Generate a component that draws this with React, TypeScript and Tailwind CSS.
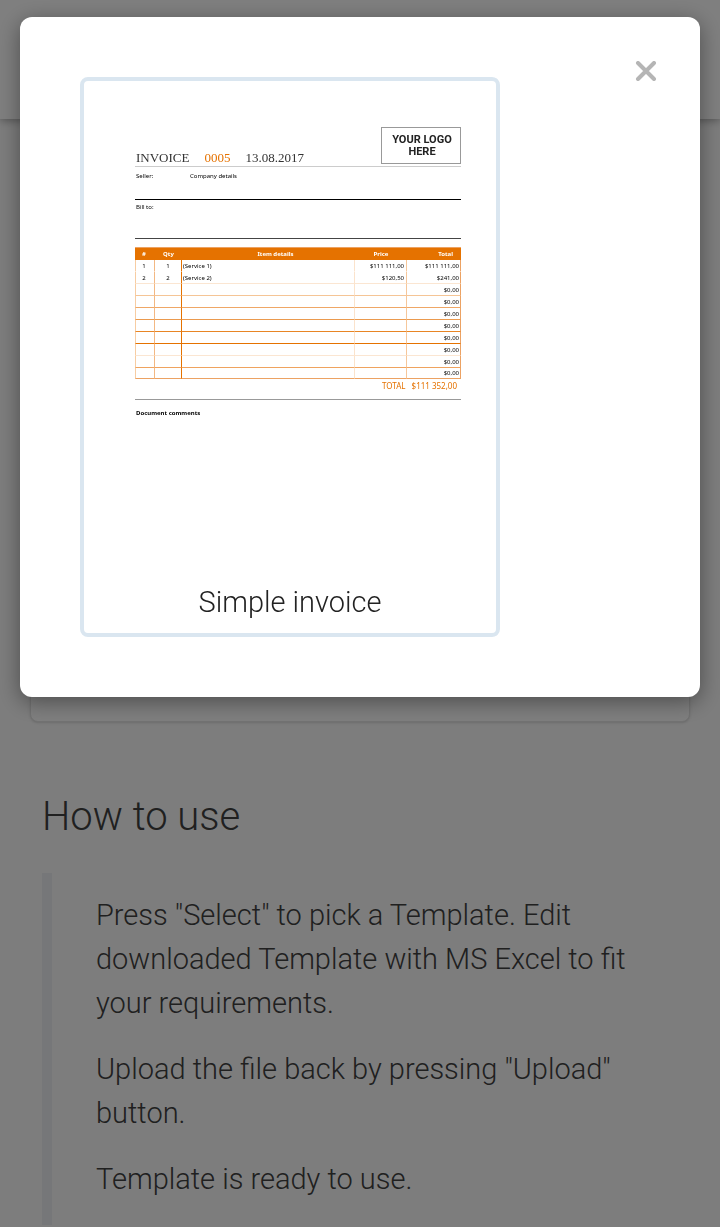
import React from 'react';

interface InvoiceRow {
  id: string;
  qty: string;
  details: string;
  price: string;
  total: string;
  lineClass: string;
}

const emptyRow = { id: '', qty: '', details: '', price: '', total: '$0,00' };

const rows: InvoiceRow[] = [
  { id: '1', qty: '1', details: '(Service 1)', price: '$111 111,00', total: '$111 111,00', lineClass: 'h-3 border-b-transparent' },
  { id: '2', qty: '2', details: '(Service 2)', price: '$120,50', total: '$241,00', lineClass: 'h-3 border-b-[#fbe6d2]' },
  { ...emptyRow, lineClass: 'h-3 border-b-[#f5c596]' },
  { ...emptyRow, lineClass: 'h-3 border-b-[#efa766]' },
  { ...emptyRow, lineClass: 'h-3 border-b-[#eb9a4e]' },
  { ...emptyRow, lineClass: 'h-3 border-b-[#e88524]' },
  { ...emptyRow, lineClass: 'h-3 border-b-[#e57200]' },
  { ...emptyRow, lineClass: 'h-3 border-b-[#fbe6d2]' },
  { ...emptyRow, lineClass: 'h-3 border-b-[#efa35f]' },
  { ...emptyRow, lineClass: 'h-[11px] border-b-[#eca263]' },
];

const steps = [
  'Press "Select" to pick a Template. Edit downloaded Template with MS Excel to fit your requirements.',
  'Upload the file back by pressing "Upload" button.',
  'Template is ready to use.',
];

const InvoiceTable: React.FC = () => (
  <table className="w-full table-fixed border-separate border-spacing-0 text-[6px] leading-[9px]">
    <colgroup>
      <col className="w-[20px]" />
      <col className="w-[27px]" />
      <col />
      <col className="w-[52px]" />
      <col className="w-[54px]" />
    </colgroup>
    <thead>
      <tr className="h-[13px] bg-[#e57200] text-white">
        <th className="border-t border-[#eca263] p-0 pr-0.5">#</th>
        <th className="border-t border-[#eca263] p-0">Qty</th>
        <th className="border-t border-[#eca263] p-0 pl-3.5">Item details</th>
        <th className="border-t border-[#eca263] p-0">Price</th>
        <th className="border-t border-[#eca263] p-0 pr-2 text-right">Total</th>
      </tr>
    </thead>
    <tbody>
      {rows.map((row, index) => {
        const base = `border-b border-r p-0 pt-px ${row.lineClass}`;
        return (
          <tr key={index}>
            <td className={`${base} border-l border-l-[#f7cda3] border-r-[#f3b883] pr-0.5 text-center`}>{row.id}</td>
            <td className={`${base} border-r-[#e57200] text-center`}>{row.qty}</td>
            <td className={`${base} border-r-[#fbe3cc]`}>
              <span className="pl-px">{row.details}</span>
            </td>
            <td className={`${base} border-r-[#f6c79b] text-right`}>
              <span className="pr-0.5">{row.price}</span>
            </td>
            <td className={`${base} border-r-[#eca263] text-right`}>
              <span className="pr-px">{row.total}</span>
            </td>
          </tr>
        );
      })}
    </tbody>
  </table>
);

const InvoicePreview: React.FC = () => (
  <div className="grow pl-[51px] pr-[35px] pt-[46px] font-['Noto_Sans',sans-serif] text-[6px] font-normal leading-[10px] text-black">
    <div className="flex items-end justify-between border-b border-[#ccc] pb-0.5">
      <div className="flex gap-[15px] pl-px font-['Liberation_Serif',serif] text-[13px] leading-[13px] text-[#333]">
        <span>INVOICE</span>
        <span className="text-[#e57200]">0005</span>
        <span>13.08.2017</span>
      </div>
      <div className="flex h-[37px] w-20 items-center justify-center border border-[#999] pl-0.5 text-center font-[Roboto,sans-serif] text-[11px] font-bold leading-[12px] text-[#222]">
        YOUR LOGO
        <br />
        HERE
      </div>
    </div>
    <div className="flex h-[33px] border-b border-black pl-px pt-1">
      <span className="w-[54px]">Seller:</span>
      <span>Company details</span>
    </div>
    <div className="mb-2 h-[39px] border-b border-[#444] pl-px pt-0.5">Bill to:</div>
    <InvoiceTable />
    <div className="flex h-[21px] justify-end gap-1.5 border-b border-[#999] pr-1 pt-0.5 text-[8px] text-[#e57200]">
      <span>TOTAL</span>
      <span>$111 352,00</span>
    </div>
    <p className="pl-px pt-2 font-bold">Document comments</p>
  </div>
);

const TemplateModal: React.FC = () => (
  <div className="fixed inset-0 bg-black/50">
    <div
      role="dialog"
      aria-modal="true"
      aria-label="Templates"
      className="mx-5 mt-[17px] flex items-start justify-between rounded-xl bg-white py-[60px] pl-[60px] pr-[42px] shadow-[0_5px_22px_rgba(0,0,0,0.4)]"
    >
      <a href="#simple-invoice" className="flex h-[560px] w-[420px] flex-col rounded-lg border-4 border-[#dae6f0] pb-[9px]">
        <InvoicePreview />
        <span className="text-center">Simple invoice</span>
      </a>
      <button type="button" aria-label="Close" className="-mt-4 text-[#b5b5b5]">
        <svg width="24" height="20" viewBox="0 0 24 20" fill="none" stroke="currentColor" strokeWidth="4" strokeLinecap="round">
          <path d="M4 2l16 16M20 2l-16 16" />
        </svg>
      </button>
    </div>
  </div>
);

const App: React.FC = () => {
  return (
    <div className="min-h-screen bg-[#fafafa] font-[Roboto,sans-serif] text-[29px] font-light leading-[44px] text-[#222]">
      <header className="h-[119px] bg-white shadow-[0_2px_8px_rgba(0,0,0,0.3)]" />
      <main className="text-[#404040]">
        <section className="mx-[30px] mt-8 min-h-[571px] rounded-lg border border-[#e4e4e4] bg-white shadow-sm" />
        <section className="px-[42px] pt-16">
          <h2 className="text-[40px] leading-[62px]">How to use</h2>
          <div className="mt-[25px] flex flex-col gap-[22px] border-l-[10px] border-[#eceff2] pb-6 pl-11 pt-5">
            {steps.map((step) => (
              <p key={step}>{step}</p>
            ))}
          </div>
        </section>
      </main>
      <TemplateModal />
    </div>
  );
};

export default App;
